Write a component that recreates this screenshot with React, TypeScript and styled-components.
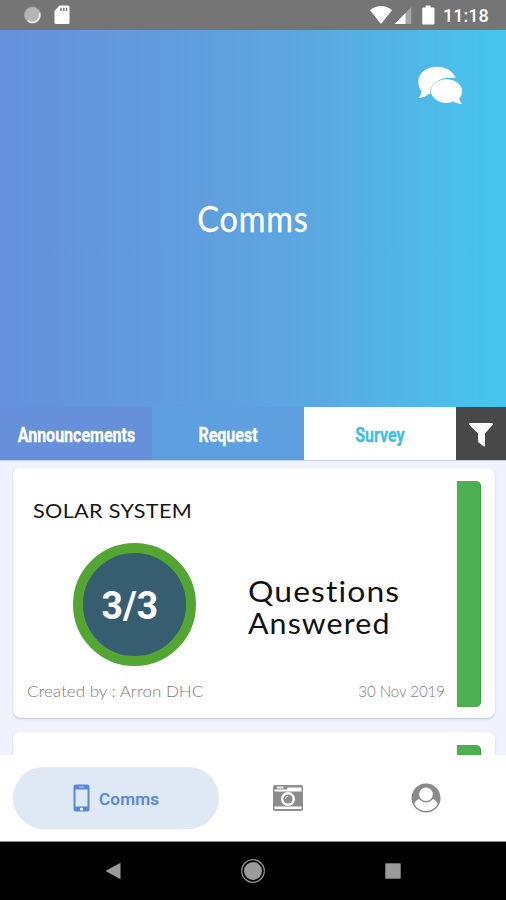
import React from "react";
import styled, { createGlobalStyle } from "styled-components";

const GlobalStyle = createGlobalStyle`
  * { box-sizing: border-box; }
  html, body { margin: 0; padding: 0; overflow: hidden; }
  svg { display: block; flex: none; }
`;

const Screen = styled.div`
  width: 506px;
  height: 900px;
  display: flex;
  flex-direction: column;
  overflow: hidden;
  background: #f0f3fe;
  font-family: Lato, sans-serif;
`;

const StatusBar = styled.div`
  height: 30px;
  flex: none;
  display: flex;
  align-items: center;
  justify-content: space-between;
  padding: 0 19px 0 23px;
  background: #757575;
`;

const StatusGroup = styled.div`
  display: flex;
  align-items: center;
`;

/* A single line of text, stretched from its left edge by default. */
const Line = styled.span<{ $size: number; $width?: number; $origin?: string }>`
  display: inline-block;
  white-space: nowrap;
  font-size: ${(p) => p.$size}px;
  line-height: 1.2;
  transform: scaleX(${(p) => p.$width ?? 1});
  transform-origin: ${(p) => p.$origin ?? "left"} center;
`;

const Clock = styled(Line)`
  color: #fff;
  font-family: Roboto, sans-serif;
  font-weight: 500;
  margin-left: 8px;
  padding-top: 2px;
  width: 44px;
`;

const Hero = styled.header`
  height: 377px;
  flex: none;
  display: flex;
  flex-direction: column;
  align-items: center;
  background: linear-gradient(90deg, #6691dc 0%, #619bdd 32%, #5ba8e1 62%, #50b8e8 82%, #45c6ee 100%);
`;

const HeroAction = styled.div`
  align-self: flex-end;
  padding: 36px 43px 0 0;
  height: 167px;
`;

const HeroTitle = styled(Line)`
  color: #fff;
  font-weight: 400;
  letter-spacing: 1px;
  -webkit-text-stroke: 0.3px #fff;
`;

const Tabs = styled.nav`
  height: 54px;
  flex: none;
  display: grid;
  grid-template-columns: 152px 152px 152px 50px;
  border-bottom: 1px solid #c3d2f3;
`;

const Tab = styled.div<{ $bg: string; $color?: string }>`
  display: flex;
  align-items: center;
  justify-content: center;
  padding-top: 2px;
  background: ${(p) => p.$bg};
  color: ${(p) => p.$color ?? "#fff"};
  font-family: Roboto, sans-serif;
  font-weight: 700;
  -webkit-text-stroke: 0.3px currentColor;
`;

const CardList = styled.main`
  height: 294px;
  flex: none;
  display: flex;
  flex-direction: column;
  gap: 14px;
  padding: 7px 11px 0 13px;
  overflow: hidden;
`;

const Card = styled.article`
  height: 250px;
  flex: none;
  display: grid;
  grid-template-columns: 1fr 24px;
  padding: 13px 14px 11px 14px;
  border-radius: 8px;
  background: #fff;
  box-shadow: 0 1px 2px rgba(60, 64, 90, 0.28);
`;

const CardBody = styled.div`
  display: flex;
  flex-direction: column;
`;

const CardTitle = styled(Line)`
  align-self: flex-start;
  margin: 17px 0 0 6px;
  color: #161616;
  letter-spacing: 0.3px;
`;

const Progress = styled.div`
  display: flex;
  align-items: center;
  margin: 21px 0 0 46px;
`;

const Ring = styled.div`
  width: 123px;
  height: 123px;
  flex: none;
  display: flex;
  align-items: center;
  justify-content: center;
  padding: 5px 10px 0 0;
  border: 10px solid #54a633;
  border-radius: 50%;
  background: #375d71;
  color: #fff;
  font-family: Roboto, sans-serif;
  font-weight: 700;
`;

const Answered = styled.div`
  display: flex;
  flex-direction: column;
  align-items: flex-start;
  margin: 5px 0 0 52px;
  color: #111;
`;

const AnsweredLine = styled(Line)`
  line-height: 32px;
  letter-spacing: 1px;
`;

const CardFooter = styled.div`
  display: flex;
  justify-content: space-between;
  margin: 16px 12px 0 0;
  color: #7c7c7c;
  font-weight: 300;
`;

const StatusStripe = styled.div`
  border-radius: 0 5px 5px 0;
  background: #4caf50;
  border-right: 1px solid #2fa338;
`;

const BottomNav = styled.nav`
  height: 87px;
  flex: none;
  display: flex;
  align-items: flex-start;
  padding: 12px 11px 0 13px;
  background: #fff;
  border-bottom: 1px solid #8a8a8a;
`;

const NavPill = styled.div`
  width: 206px;
  height: 62px;
  display: flex;
  align-items: center;
  padding-left: 60px;
  gap: 9px;
  border-radius: 31px;
  background: #dfe8f5;
  color: #5688dc;
  font-family: Roboto, sans-serif;
  font-weight: 500;
`;

const NavLabel = styled(Line)`
  padding-top: 2px;
  letter-spacing: 0.2px;
  -webkit-text-stroke: 0.2px currentColor;
`;

const NavItem = styled.div`
  width: 138px;
  height: 62px;
  display: flex;
  align-items: center;
  justify-content: center;
`;

const SystemNav = styled.div`
  flex: 1;
  display: grid;
  grid-template-columns: 1fr 1fr 1fr;
  align-items: center;
  justify-items: center;
  padding: 0 43px;
  background: #000;
`;

const ChatIcon = () => (
  <svg width="46" height="40" viewBox="0 0 46 40" fill="#fff">
    <path d="M19.7.8C9.3.8 1.3 7.3 1.3 15.6c0 4.3 1.3 7.3 3.200 9.500-.1 2.800-1.200 5-3 7 4.500-.3 7.800-1.700 10.300-4h1.800C11.800 19.9 20.500 12 32 12h6.600C36.100 5.300 28.700.8 19.700.8Z" />
    <path d="M29.500 13.300c-8.600 0-15.500 5.300-15.500 11.800S20.900 37 29.500 37c2.400 0 4.800-.5 6.800-1.400 2.700 1.500 5.700 2.400 8.700 2.400-1.600-1.700-2.500-3.400-2.800-5.400 2-2.200 3-4.700 3-7.500 0-6.500-7.100-11.800-15.700-11.800Z" />
  </svg>
);

const StatusIcons = () => (
  <svg width="66" height="22" viewBox="0 0 66 22" fill="#fff">
    <path d="M1 6.200Q12-2.200 23 6.200L12 20Z" />
    <path d="M42.300 3v17H25.700Z" fillOpacity=".35" />
    <path d="M36.500 9v11H25.700Z" />
    <path d="M56.700 1.500h4.800v2h3q1 0 1 1v15q0 1-1 1h-10.200q-1 0-1-1v-15q0-1 1-1h2.400Z" />
  </svg>
);

interface Survey {
  title: string;
  progress: string;
  author: string;
  date: string;
}

const SurveyCard = ({ survey }: { survey?: Survey }) => (
  <Card>
    <CardBody>
      {survey && (
        <>
          <CardTitle $size={20} $width={1.08}>{survey.title}</CardTitle>
          <Progress>
            <Ring><Line $size={38} $width={0.98} $origin="center">{survey.progress}</Line></Ring>
            <Answered>
              <AnsweredLine $size={28} $width={1.135}>Questions</AnsweredLine>
              <AnsweredLine $size={28} $width={1.085}>Answered</AnsweredLine>
            </Answered>
          </Progress>
          <CardFooter>
            <Line $size={15} $width={1.135}>Created by : {survey.author}</Line>
            <Line $size={15} $origin="right">{survey.date}</Line>
          </CardFooter>
        </>
      )}
    </CardBody>
    <StatusStripe />
  </Card>
);

const solarSystem: Survey = {
  title: "SOLAR SYSTEM",
  progress: "3/3",
  author: "Arron DHC",
  date: "30 Nov 2019",
};

export default function App() {
  return (
    <Screen>
      <GlobalStyle />
      <StatusBar>
        <StatusGroup>
          <svg width="50" height="22" viewBox="0 0 50 22">
            <circle cx="9.500" cy="11" r="8" fill="#b5b5b5" stroke="#a5a5a5" />
            <path d="M16.500 9a7.500 7.500 0 0 1-11.500 8" fill="none" stroke="#e8e8e8" strokeWidth="1.700" />
            <path d="M36.500 1.500h8.500q1.500 0 1.500 1.500v15.500q0 1.500-1.500 1.500h-12q-1.500 0-1.500-1.500V7Z" fill="#fff" />
            <path d="M38 4v3M40.800 4v3M43.500 4v3" stroke="#777" strokeWidth="1.400" />
          </svg>
        </StatusGroup>
        <StatusGroup>
          <StatusIcons />
          <Clock $size={18}>11:18</Clock>
        </StatusGroup>
      </StatusBar>
      <Hero>
        <HeroAction><ChatIcon /></HeroAction>
        <HeroTitle $size={36} $width={0.9} $origin="center">Comms</HeroTitle>
      </Hero>
      <Tabs>
        <Tab $bg="#6790db"><Line $size={20} $width={0.8} $origin="center">Announcements</Line></Tab>
        <Tab $bg="#5ea0df"><Line $size={20} $width={0.8} $origin="center">Request</Line></Tab>
        <Tab $bg="#fff" $color="#3bc0e8"><Line $size={20} $width={0.8} $origin="center">Survey</Line></Tab>
        <Tab $bg="#484848">
          <svg width="26" height="26" viewBox="0 0 26 26" fill="#fff">
            <path d="M2 1h22q1.500 0 1 1.500L17 11.500V23.500q0 1.500-1.500.8L10 20V11.500L1 2.500Q.5 1 2 1Z" />
          </svg>
        </Tab>
      </Tabs>
      <CardList>
        <SurveyCard survey={solarSystem} />
        <SurveyCard />
      </CardList>
      <BottomNav>
        <NavPill>
          <svg width="17" height="28" viewBox="0 0 17 28">
            <rect x=".5" y=".5" width="16" height="27" rx="2.500" fill="#5688dc" />
            <path d="M2.500 5.500h12v17h-12Z" fill="#dfe8f5" />
            <path d="M6 3h5" stroke="#bdd0f1" />
            <circle cx="8.500" cy="25" r="1.500" fill="#fff" />
          </svg>
          <NavLabel $size={17}>Comms</NavLabel>
        </NavPill>
        <NavItem>
          <svg width="32" height="28" viewBox="0 0 32 28">
            <rect x="1" y="1" width="30" height="26" rx="2" fill="#8d8d8d" />
            <path d="M2.500 5.500h12l1.500-2h13.500v4h-27ZM2.500 22.500h27v2.500h-27Z" fill="#fff" />
            <path d="M5 2.500h6.500v2H5Z" fill="#eee" />
            <circle cx="16" cy="15" r="7" fill="#fff" />
            <circle cx="16" cy="15" r="4.600" fill="#8d8d8d" />
            <path d="M13.300 15a2.700 2.700 0 0 1 2.700-2.700" fill="none" stroke="#ddd" />
          </svg>
        </NavItem>
        <NavItem>
          <svg width="30" height="30" viewBox="0 0 30 30">
            <circle cx="15" cy="15" r="14.500" fill="#8b8b8b" />
            <circle cx="15" cy="11.300" r="6.800" fill="#fff" />
            <path d="M7.800 16q7.200 6.800 14.400 0 3.500 1.300 4.500 5a13.300 13.300 0 0 1-23.400 0q1-3.700 4.500-5Z" fill="#fff" />
          </svg>
        </NavItem>
      </BottomNav>
      <SystemNav>
        <svg width="16" height="18" viewBox="0 0 16 18"><path d="M.5 9 15.500.8v16.400Z" fill="#9b9b9b" /></svg>
        <svg width="26" height="26" viewBox="0 0 26 26">
          <circle cx="13" cy="13" r="11.300" fill="none" stroke="#929292" strokeWidth="1.300" />
          <circle cx="13" cy="13" r="9" fill="#9b9b9b" />
        </svg>
        <svg width="16" height="16" viewBox="0 0 16 16"><path d="M.3.3h15.400v15.400H.3Z" fill="#9b9b9b" /></svg>
      </SystemNav>
    </Screen>
  );
}
